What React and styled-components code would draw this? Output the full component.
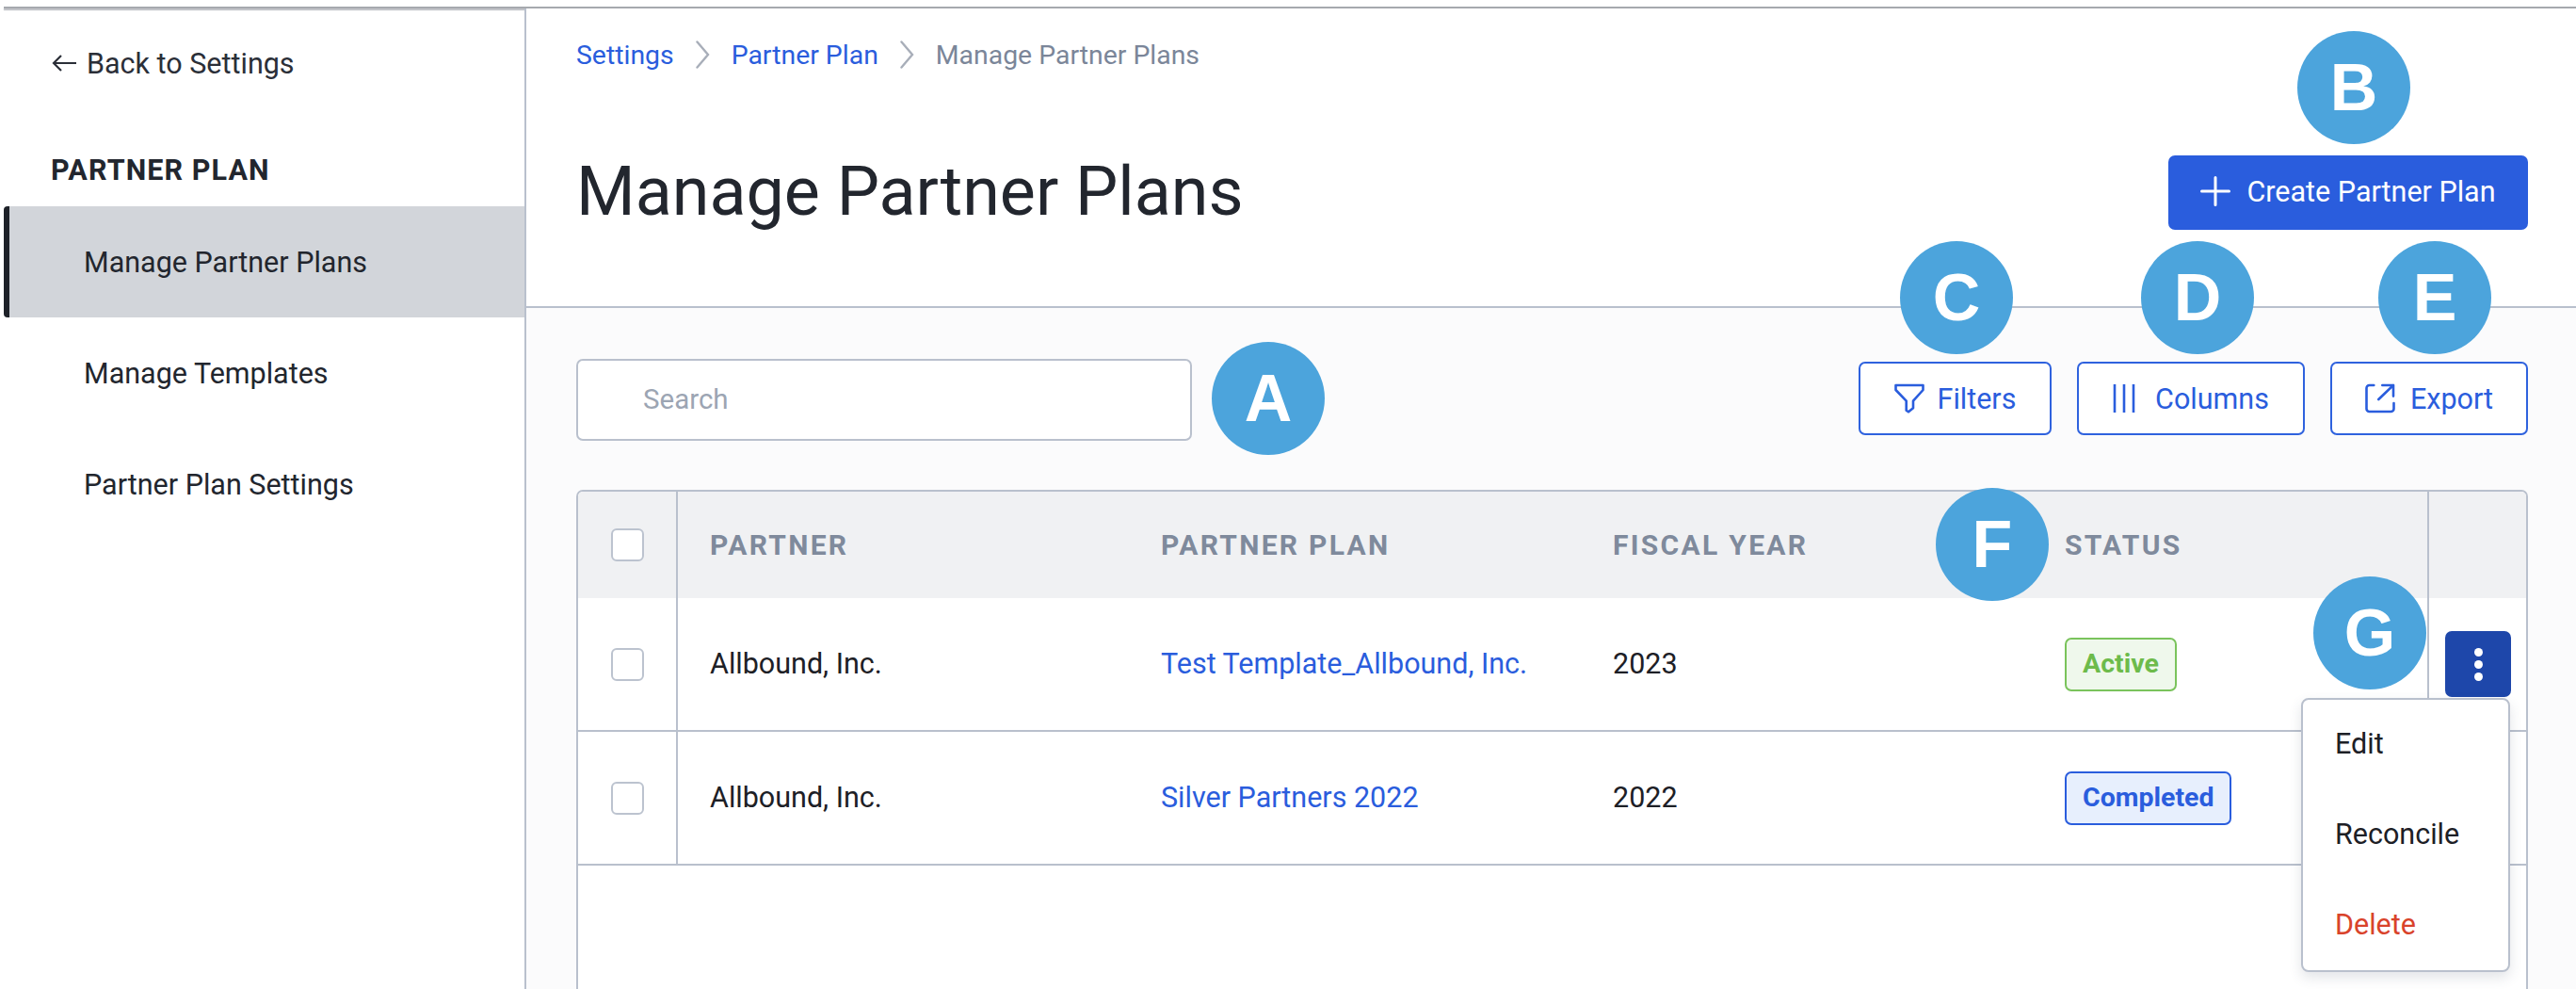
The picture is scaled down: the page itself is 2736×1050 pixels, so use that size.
import React from 'react';
import styled, { createGlobalStyle } from 'styled-components';

const Global = createGlobalStyle`
  html, body { margin: 0; padding: 0; background: #fff; }
  body { font-family: Roboto, "Liberation Sans", sans-serif; color: #22262e; overflow: hidden; }
  * { box-sizing: border-box; }
`;

const Page = styled.div`
  position: relative;
  width: 2736px;
  height: 1050px;
  overflow: hidden;
  padding-top: 7px;
`;

const TopRule = styled.div`
  height: 2px;
  margin-left: 4px;
  background: #a6a9ae;
  box-shadow: 0 2px 1px rgba(120, 125, 135, 0.5);
`;

const Shell = styled.div`
  display: flex;
  height: 1041px;
  padding-left: 4px;
`;

const Sidebar = styled.aside`
  width: 555px;
  flex: none;
  border-right: 2px solid #b9c0cd;
`;

const BackLink = styled.a`
  display: flex;
  align-items: center;
  gap: 11px;
  height: 42px;
  margin: 37px 0 0 51px;
  font-size: 30.500px;
  color: #2b2f38;
`;

const NavTitle = styled.div`
  margin: 72px 0 0 50px;
  height: 42px;
  line-height: 42px;
  font-size: 30.500px;
  font-weight: 700;
  letter-spacing: 1.1px;
  color: #22262e;
`;

const NavList = styled.nav`
  margin-top: 17px;
`;

const NavItem = styled.a`
  display: flex;
  align-items: center;
  height: 118px;
  padding-left: 85px;
  font-size: 30.500px;
  color: #22262e;
  ${p => p.$active && `
    background: #d2d5da;
    border-left: 6px solid #1e2229;
    border-radius: 4px 0 0 4px;
    padding-left: 79px;
  `}
`;

const Main = styled.main`
  flex: 1;
  display: flex;
  flex-direction: column;
  min-width: 0;
`;

const Head = styled.header`
  height: 318px;
  flex: none;
  padding: 29px 51px 0 53px;
  border-bottom: 2px solid #b9c0cd;
  background: #fff;
`;

const Crumbs = styled.div`
  display: flex;
  align-items: center;
  height: 40px;
  font-size: 28.400px;
`;

const Crumb = styled.a`
  color: ${p => (p.$current ? '#7b8699' : '#2a5ddd')};
`;

const CrumbSep = styled.svg`
  flex: none;
  margin: 0 23px;
  color: #a8aeb9;
`;

const TitleRow = styled.div`
  display: flex;
  align-items: center;
  justify-content: space-between;
  margin-top: 86px;
`;

const Title = styled.h1`
  margin: 0;
  font-size: 71.800px;
  font-weight: 400;
  line-height: 80px;
  color: #22262e;
`;

const PrimaryButton = styled.button`
  display: flex;
  align-items: center;
  justify-content: center;
  gap: 17px;
  width: 382px;
  height: 79px;
  padding: 0 0 2px;
  border: 0;
  border-radius: 7px;
  background: #2a5ddd;
  color: #fff;
  font: 400 30.500px Roboto, sans-serif;
`;

const Content = styled.section`
  flex: 1;
  background: #fbfbfc;
  padding: 54px 51px 0 53px;
  min-height: 0;
`;

const Toolbar = styled.div`
  display: flex;
  align-items: flex-start;
  justify-content: space-between;
  height: 86px;
`;

const SearchBox = styled.div`
  display: flex;
  align-items: center;
  width: 654px;
  height: 87px;
  padding: 0 0 2px 69px;
  background: #fff;
  border: 2px solid #b9c0cd;
  border-radius: 7px;
  font-size: 29.500px;
  color: #9ca5b3;
`;

const Actions = styled.div`
  display: flex;
  gap: 27px;
  margin-top: 3px;
`;

const OutlineButton = styled.button`
  display: flex;
  align-items: center;
  justify-content: center;
  gap: ${p => p.$gap || 16}px;
  width: ${p => p.$w}px;
  height: 78px;
  background: #fff;
  border: 2px solid #2f62de;
  border-radius: 7px;
  color: #2a5ddd;
  font: 400 30.500px Roboto, sans-serif;
`;

const Table = styled.div`
  margin-top: 53px;
  height: 540px;
  background: #fff;
  border: 2px solid #b9c0cd;
  border-bottom: 0;
  border-radius: 7px 7px 0 0;
`;

const Columns = '106px 513px 480px 480px 385px 1fr';

const HeadRow = styled.div`
  display: grid;
  grid-template-columns: ${Columns};
  height: 113px;
  background: #f0f1f3;
  border-radius: 5px 5px 0 0;
`;

const Row = styled.div`
  display: grid;
  grid-template-columns: ${Columns};
  height: 142px;
  border-bottom: 2px solid #b9c0cd;
`;

const CheckCell = styled.div`
  display: flex;
  align-items: center;
  justify-content: center;
  padding-left: 1px;
  border-right: 2px solid #b9c0cd;
`;

const Check = styled.span`
  display: block;
  width: 35px;
  height: 35px;
  background: #fff;
  border: 2px solid #bcc3cf;
  border-radius: 6px;
`;

const Cell = styled.div`
  display: flex;
  align-items: center;
  padding-left: ${p => p.$pad || 0}px;
  font-size: 30.500px;
  color: #1d2026;
`;

const BodyText = styled.span`
  margin-bottom: 2px;
`;

const HeadCell = styled(Cell)`
  font-weight: 700;
  font-size: 30px;
  letter-spacing: 2.300px;
  color: #7f8a9c;
`;

const PlanLink = styled.a`
  margin-bottom: 2px;
  color: #2a5ddd;
`;

const ActionCell = styled.div`
  display: flex;
  justify-content: flex-end;
  padding: ${p => p.$top || 0}px 16px 0 0;
  border-left: ${p => (p.$line ? '2px solid #b9c0cd' : '0')};
`;

const Badge = styled.span`
  display: inline-flex;
  align-items: center;
  height: 57px;
  padding: 0 17px 2px;
  border: 2px solid ${p => (p.$tone === 'green' ? '#7ac35c' : '#2a5ddd')};
  border-radius: 7px;
  background: ${p => (p.$tone === 'green' ? '#eff8ec' : '#e7effd')};
  color: ${p => (p.$tone === 'green' ? '#6dbb4b' : '#2a5ddd')};
  font-weight: 700;
  font-size: 28.500px;
`;

const KebabButton = styled.button`
  display: flex;
  flex-direction: column;
  align-items: center;
  justify-content: center;
  gap: 4px;
  width: 70px;
  height: 70px;
  padding: 0;
  border: 0;
  border-radius: 7px;
  background: #1e47aa;
`;

const Dot = styled.i`
  display: block;
  width: 9px;
  height: 9px;
  border-radius: 50%;
  background: #fff;
`;

const Menu = styled.div`
  position: absolute;
  left: 2444px;
  top: 741px;
  display: flex;
  flex-direction: column;
  justify-content: center;
  width: 222px;
  height: 291px;
  padding: 0 0 3px 34px;
  background: #fff;
  border: 2px solid #b9c0cd;
  border-radius: 8px;
  box-shadow: 0 6px 14px rgba(60, 70, 90, 0.14);
`;

const MenuItem = styled.div`
  display: flex;
  align-items: center;
  height: 96px;
  flex: none;
  font-size: 30.500px;
  color: ${p => (p.$danger ? '#d9432b' : '#1d2026')};
`;

const Bubble = styled.div`
  position: absolute;
  left: ${p => p.$x - 60}px;
  top: ${p => p.$y - 60}px;
  display: flex;
  align-items: center;
  justify-content: center;
  width: 120px;
  height: 120px;
  border-radius: 50%;
  background: #4ca4dc;
  color: #fff;
  font-family: "Liberation Sans", Arial, sans-serif;
  font-weight: 700;
  font-size: 70px;
`;

const BackArrow = () => (
  <svg width="26" height="20" viewBox="0 0 26 20" fill="none" stroke="currentColor" strokeWidth="2.200">
    <path d="M2 10h24M10 2l-8 8 8 8" />
  </svg>
);

const Chevron = () => (
  <CrumbSep width="15" height="30" viewBox="0 0 15 30" fill="none" stroke="currentColor" strokeWidth="2.400" strokeLinecap="round">
    <path d="M1.500 1.500L13 15 1.500 28.500" />
  </CrumbSep>
);

const PlusIcon = () => (
  <svg width="32" height="32" viewBox="0 0 32 32" fill="none" stroke="currentColor" strokeWidth="3" strokeLinecap="round">
    <path d="M16 1.500v29M1.500 16h29" />
  </svg>
);

const FilterIcon = () => (
  <svg width="32" height="32" viewBox="0 0 32 32" fill="none" stroke="currentColor" strokeWidth="2.600" strokeLinejoin="round">
    <path d="M1.500 2h29v5L20 18.700v7.600l-5 4-2.300-1.600v-10L1.500 7z" />
  </svg>
);

const ColumnsIcon = () => (
  <svg width="24" height="32" viewBox="0 0 24 32" fill="none" stroke="currentColor" strokeWidth="2.600">
    <path d="M2 1v30M12 1v30M22 1v30" />
  </svg>
);

const ExportIcon = () => (
  <svg width="32" height="32" viewBox="0 0 32 32" fill="none" stroke="currentColor" strokeWidth="2.600" strokeLinecap="round" strokeLinejoin="round">
    <path d="M9.300 2H4.500a3 3 0 0 0-3 3v22a3 3 0 0 0 3 3h23a3 3 0 0 0 3-3v-6" />
    <path d="M14.300 17L30 2M18.300 2H30v11.600" />
  </svg>
);

const rows = [
  { partner: 'Allbound, Inc.', plan: 'Test Template_Allbound, Inc.', year: '2023', status: 'Active', tone: 'green', kebab: true },
  { partner: 'Allbound, Inc.', plan: 'Silver Partners 2022', year: '2022', status: 'Completed', tone: 'blue' },
];

const bubbles = [
  ['A', 1347, 423], ['B', 2500, 93], ['C', 2078, 316], ['D', 2334, 316],
  ['E', 2586, 316], ['F', 2116, 578], ['G', 2517, 672],
];

export default function App() {
  return (
    <Page>
      <Global />
      <TopRule />
      <Shell>
        <Sidebar>
          <BackLink><BackArrow />Back to Settings</BackLink>
          <NavTitle>PARTNER PLAN</NavTitle>
          <NavList>
            <NavItem $active>Manage Partner Plans</NavItem>
            <NavItem>Manage Templates</NavItem>
            <NavItem>Partner Plan Settings</NavItem>
          </NavList>
        </Sidebar>
        <Main>
          <Head>
            <Crumbs>
              <Crumb>Settings</Crumb>
              <Chevron />
              <Crumb>Partner Plan</Crumb>
              <Chevron />
              <Crumb $current>Manage Partner Plans</Crumb>
            </Crumbs>
            <TitleRow>
              <Title>Manage Partner Plans</Title>
              <PrimaryButton><PlusIcon />Create Partner Plan</PrimaryButton>
            </TitleRow>
          </Head>
          <Content>
            <Toolbar>
              <SearchBox>Search</SearchBox>
              <Actions>
                <OutlineButton $w={205} $gap={14}><FilterIcon />Filters</OutlineButton>
                <OutlineButton $w={242} $gap={21}><ColumnsIcon />Columns</OutlineButton>
                <OutlineButton $w={210}><ExportIcon />Export</OutlineButton>
              </Actions>
            </Toolbar>
            <Table>
              <HeadRow>
                <CheckCell><Check /></CheckCell>
                <HeadCell $pad={34}>PARTNER</HeadCell>
                <HeadCell>PARTNER PLAN</HeadCell>
                <HeadCell>FISCAL YEAR</HeadCell>
                <HeadCell>STATUS</HeadCell>
                <ActionCell $line />
              </HeadRow>
              {rows.map(r => (
                <Row key={r.plan}>
                  <CheckCell><Check /></CheckCell>
                  <Cell $pad={34}><BodyText>{r.partner}</BodyText></Cell>
                  <Cell><PlanLink>{r.plan}</PlanLink></Cell>
                  <Cell><BodyText>{r.year}</BodyText></Cell>
                  <Cell><Badge $tone={r.tone}>{r.status}</Badge></Cell>
                  <ActionCell $line={r.kebab} $top={35}>
                    {r.kebab && <KebabButton><Dot /><Dot /><Dot /></KebabButton>}
                  </ActionCell>
                </Row>
              ))}
            </Table>
          </Content>
        </Main>
      </Shell>
      <Menu>
        <MenuItem>Edit</MenuItem>
        <MenuItem>Reconcile</MenuItem>
        <MenuItem $danger>Delete</MenuItem>
      </Menu>
      {bubbles.map(([letter, x, y]) => (
        <Bubble key={letter} $x={x} $y={y}>{letter}</Bubble>
      ))}
    </Page>
  );
}
